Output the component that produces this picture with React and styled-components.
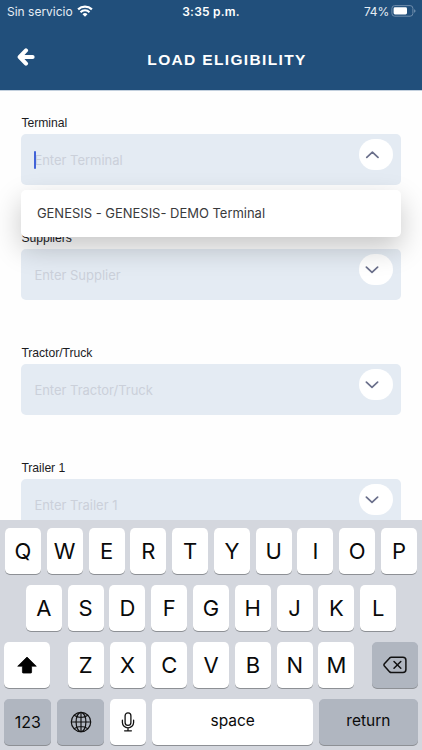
import styled, { createGlobalStyle } from "styled-components";

const fields = [
  {
    label: "Terminal",
    placeholder: "Enter Terminal",
    focused: true,
    options: ["GENESIS - GENESIS- DEMO Terminal"],
  },
  { label: "Suppliers", placeholder: "Enter Supplier" },
  { label: "Tractor/Truck", placeholder: "Enter Tractor/Truck" },
  { label: "Trailer 1", placeholder: "Enter Trailer 1" },
];

export default function App() {
  return (
    <Screen>
      <GlobalStyle />
      <Header>
        <StatusBar>
          <Carrier>
            Sin servicio
            <WifiIcon />
          </Carrier>
          <Clock>3:35 p.m.</Clock>
          <Power>
            74%
            <BatteryIcon />
          </Power>
        </StatusBar>
        <NavBar>
          <BackButton aria-label="Back">
            <BackIcon />
          </BackButton>
          <Title>LOAD ELIGIBILITY</Title>
        </NavBar>
      </Header>
      <Form>
        {fields.map((field) => (
          <SelectField key={field.label} {...field} />
        ))}
      </Form>
      <Keyboard />
    </Screen>
  );
}

function SelectField({ label, placeholder, focused, options }) {
  return (
    <Field>
      <Label>{label}</Label>
      <InputBox>
        {focused && <Caret />}
        <Placeholder>{placeholder}</Placeholder>
        <Toggle aria-label={label}>
          <ChevronIcon up={focused} />
        </Toggle>
        {options && (
          <Dropdown>
            {options.map((option) => (
              <Option key={option}>{option}</Option>
            ))}
          </Dropdown>
        )}
      </InputBox>
    </Field>
  );
}

function Keyboard() {
  return (
    <Keys>
      <KeyRow>
        {[..."QWERTYUIOP"].map((letter) => (
          <Key key={letter}>{letter}</Key>
        ))}
      </KeyRow>
      <KeyRow>
        {[..."ASDFGHJKL"].map((letter) => (
          <Key key={letter}>{letter}</Key>
        ))}
      </KeyRow>
      <KeyRow $spread>
        <Key $width={46} aria-label="Shift">
          <ShiftIcon />
        </Key>
        <Letters>
          {[..."ZXCVBNM"].map((letter) => (
            <Key key={letter}>{letter}</Key>
          ))}
        </Letters>
        <Key $width={45.8} $dark aria-label="Delete">
          <DeleteIcon />
        </Key>
      </KeyRow>
      <KeyRow $spread>
        <Key $width={47} $dark $size={16}>
          123
        </Key>
        <Key $width={47} $dark aria-label="Next keyboard">
          <GlobeIcon />
        </Key>
        <Key aria-label="Dictate">
          <MicIcon />
        </Key>
        <Key $width={160.8} $size={15.5} $lift={3}>
          space
        </Key>
        <Key $width={98.6} $dark $size={15.5} $lift={3}>
          return
        </Key>
      </KeyRow>
    </Keys>
  );
}

function WifiIcon() {
  return (
    <svg width="16" height="12" viewBox="0 0 16 12" fill="none" stroke="#fff">
      <path d="M1.1 4.4a10 10 0 0 1 13.8 0" strokeWidth="2.2" />
      <path d="M3.5 7.2a6.3 6.3 0 0 1 9 0" strokeWidth="2" />
      <path d="M5.5 9.2a3.5 3.5 0 0 1 5 0L8 11.8z" fill="#fff" stroke="none" />
    </svg>
  );
}

function BatteryIcon() {
  return (
    <svg width="26" height="12" viewBox="0 0 26 12">
      <rect x="0.9" y="0.6" width="21" height="10.6" rx="2.8" fill="none" stroke="#6f8dac" />
      <rect x="2.6" y="2.3" width="13.4" height="7.2" rx="1.4" fill="#fff" />
      <path d="M23.3 4.2v3.6c1.5-.6 1.5-3 0-3.6z" fill="#8ca5bf" />
    </svg>
  );
}

function BackIcon() {
  return (
    <svg width="18" height="18" viewBox="0 0 18 18" fill="none" stroke="#fff">
      <path
        d="M9 2.4L2.7 9 9 15.6M3.4 9h12.2"
        strokeWidth="4.1"
        strokeLinecap="round"
        strokeLinejoin="round"
      />
    </svg>
  );
}

function ChevronIcon({ up }) {
  return (
    <svg width="14" height="8" viewBox="0 0 14 8" fill="none" stroke="#6a6f8b">
      <path
        d={up ? "M1.8 6.4L7.4 1.2 13 6.4" : "M1.4 1.2L7 6.4l5.6-5.2"}
        strokeWidth="1.7"
        strokeLinecap="round"
        strokeLinejoin="round"
      />
    </svg>
  );
}

function ShiftIcon() {
  return (
    <svg width="20" height="18" viewBox="0 0 20 18">
      <path
        d="M10 1L19.3 10.2h-4.7v6q0 .9-.9.9H6.3q-.9 0-.9-.9v-6H.7z"
        fill="#000"
        stroke="#000"
        strokeWidth=".7"
        strokeLinejoin="round"
      />
    </svg>
  );
}

function DeleteIcon() {
  return (
    <svg width="24" height="18" viewBox="0 0 24 18" fill="none" stroke="#111">
      <path
        d="M8.3 1.2h11.6a3 3 0 0 1 3 3v9.4a3 3 0 0 1-3 3H8.3q-.9 0-1.6-.7L1.4 10q-.9-1.1 0-2.2l5.3-5.9q.7-.7 1.6-.7z"
        strokeWidth="1.5"
      />
      <path d="M11 5.5l6.8 6.8M17.8 5.5L11 12.3" strokeWidth="1.5" strokeLinecap="round" />
    </svg>
  );
}

function GlobeIcon() {
  return (
    <svg width="22" height="22" viewBox="0 0 22 22" fill="none" stroke="#111" strokeWidth="1.2">
      <circle cx="11" cy="11" r="9.7" />
      <ellipse cx="11" cy="11" rx="4.9" ry="9.7" />
      <path d="M11 1.3v19.4M1.3 11h19.4M4 4.3q7 4.4 14 0M4 17.7q7-4.4 14 0" />
    </svg>
  );
}

function MicIcon() {
  return (
    <svg width="14" height="20" viewBox="0 0 14 20" fill="none" stroke="#111" strokeWidth="1.3">
      <rect x="4.1" y="0.8" width="5.8" height="12.6" rx="2.9" />
      <path
        d="M1.4 8.2v2.4a5.6 5.2 0 0 0 11.2 0V8.2M7 15.8v3M3.6 18.8h6.8"
        strokeLinecap="round"
      />
    </svg>
  );
}

const GlobalStyle = createGlobalStyle`
  * {
    box-sizing: border-box;
  }
  body {
    margin: 0;
    background: #fff;
  }
  button {
    padding: 0;
    border: none;
    background: none;
    font-family: inherit;
  }
  svg {
    display: block;
    flex-shrink: 0;
  }
`;

const Screen = styled.div`
  display: flex;
  flex-direction: column;
  width: 422px;
  height: 750px;
  overflow: hidden;
  background: #fefefe;
  font-family: Inter, "Liberation Sans", sans-serif;
`;

const Header = styled.header`
  height: 91px;
  flex-shrink: 0;
  background: #214f7b;
  border-bottom: 1px solid #c3d0de;
  color: #fff;
`;

const StatusBar = styled.div`
  display: grid;
  grid-template-columns: 1fr auto 1fr;
  align-items: center;
  height: 22px;
  padding: 0 5px 0 7px;
  font-size: 12px;
`;

const Carrier = styled.div`
  display: flex;
  align-items: center;
  gap: 4px;
  color: #e6edf4;
`;

const Clock = styled.div`
  margin-left: -2px;
  font-weight: 600;
  letter-spacing: 0.2px;
`;

const Power = styled.div`
  display: flex;
  align-items: center;
  justify-content: flex-end;
  gap: 2px;
  letter-spacing: -0.2px;
  color: #e6edf4;
`;

const NavBar = styled.div`
  display: grid;
  grid-template-columns: 52px 1fr 22px;
  align-items: center;
  height: 69px;
`;

const BackButton = styled.button`
  display: flex;
  justify-content: center;
`;

const Title = styled.h1`
  margin: 0;
  padding: 7px 0 0 2px;
  font-family: "Liberation Sans", Arial, sans-serif;
  font-size: 15.5px;
  font-weight: 700;
  letter-spacing: 1.35px;
  line-height: 20px;
  text-align: center;
`;

const Form = styled.main`
  display: flex;
  flex-direction: column;
  gap: 42px;
  height: 429px;
  flex-shrink: 0;
  padding: 21px 21.4px 0;
  overflow: hidden;
`;

const Field = styled.div`
  flex-shrink: 0;
`;

const Label = styled.div`
  height: 22px;
  padding-top: 1px;
  font-family: "Liberation Sans", Arial, sans-serif;
  font-size: 12.2px;
  letter-spacing: -0.05px;
  line-height: 20px;
  color: #1c1c1e;
`;

const InputBox = styled.div`
  position: relative;
  display: flex;
  align-items: center;
  height: 51px;
  padding: 0 8px 0 13px;
  border-radius: 5px;
  background: #e4ebf3;
`;

const Caret = styled.span`
  z-index: 1;
  width: 2px;
  height: 18px;
  margin-right: -2px;
  border-radius: 1px;
  background: #4263d8;
`;

const Placeholder = styled.span`
  flex: 1;
  font-size: 13px;
  letter-spacing: -0.02px;
  color: #cbd0da;
`;

const Toggle = styled.button`
  display: flex;
  align-items: center;
  align-self: flex-start;
  width: 33.5px;
  height: 31px;
  margin-top: 5px;
  padding-left: 6px;
  border-radius: 16px;
  background: #fff;
`;

const Dropdown = styled.div`
  position: absolute;
  top: 56px;
  left: 0;
  right: 0;
  z-index: 2;
  border-radius: 5px;
  background: #fff;
  box-shadow: 0 11px 28px rgba(0, 0, 0, 0.22);
`;

const Option = styled.div`
  padding: 0 15.5px;
  font-size: 13px;
  letter-spacing: -0.02px;
  line-height: 46.5px;
  color: #3a3a3c;
`;

const Keys = styled.section`
  display: flex;
  flex-direction: column;
  gap: 11px;
  height: 230px;
  flex-shrink: 0;
  padding: 8px 4.3px 0;
  background: #d4d7de;
`;

const KeyRow = styled.div`
  display: flex;
  justify-content: ${({ $spread }) => ($spread ? "space-between" : "center")};
  gap: ${({ $spread }) => ($spread ? 0 : "5.8px")};
`;

const Letters = styled.div`
  display: flex;
  gap: 5.8px;
`;

const Key = styled.button`
  display: flex;
  align-items: center;
  justify-content: center;
  width: ${({ $width = 36 }) => $width}px;
  height: 46px;
  padding-bottom: ${({ $lift = 0 }) => $lift}px;
  border-radius: 5px;
  background: ${({ $dark }) => ($dark ? "#b0b6c0" : "#fff")};
  box-shadow: 0 1px 0 #8d9095;
  font-size: ${({ $size = 22 }) => $size}px;
  color: #0a0a0a;
`;
